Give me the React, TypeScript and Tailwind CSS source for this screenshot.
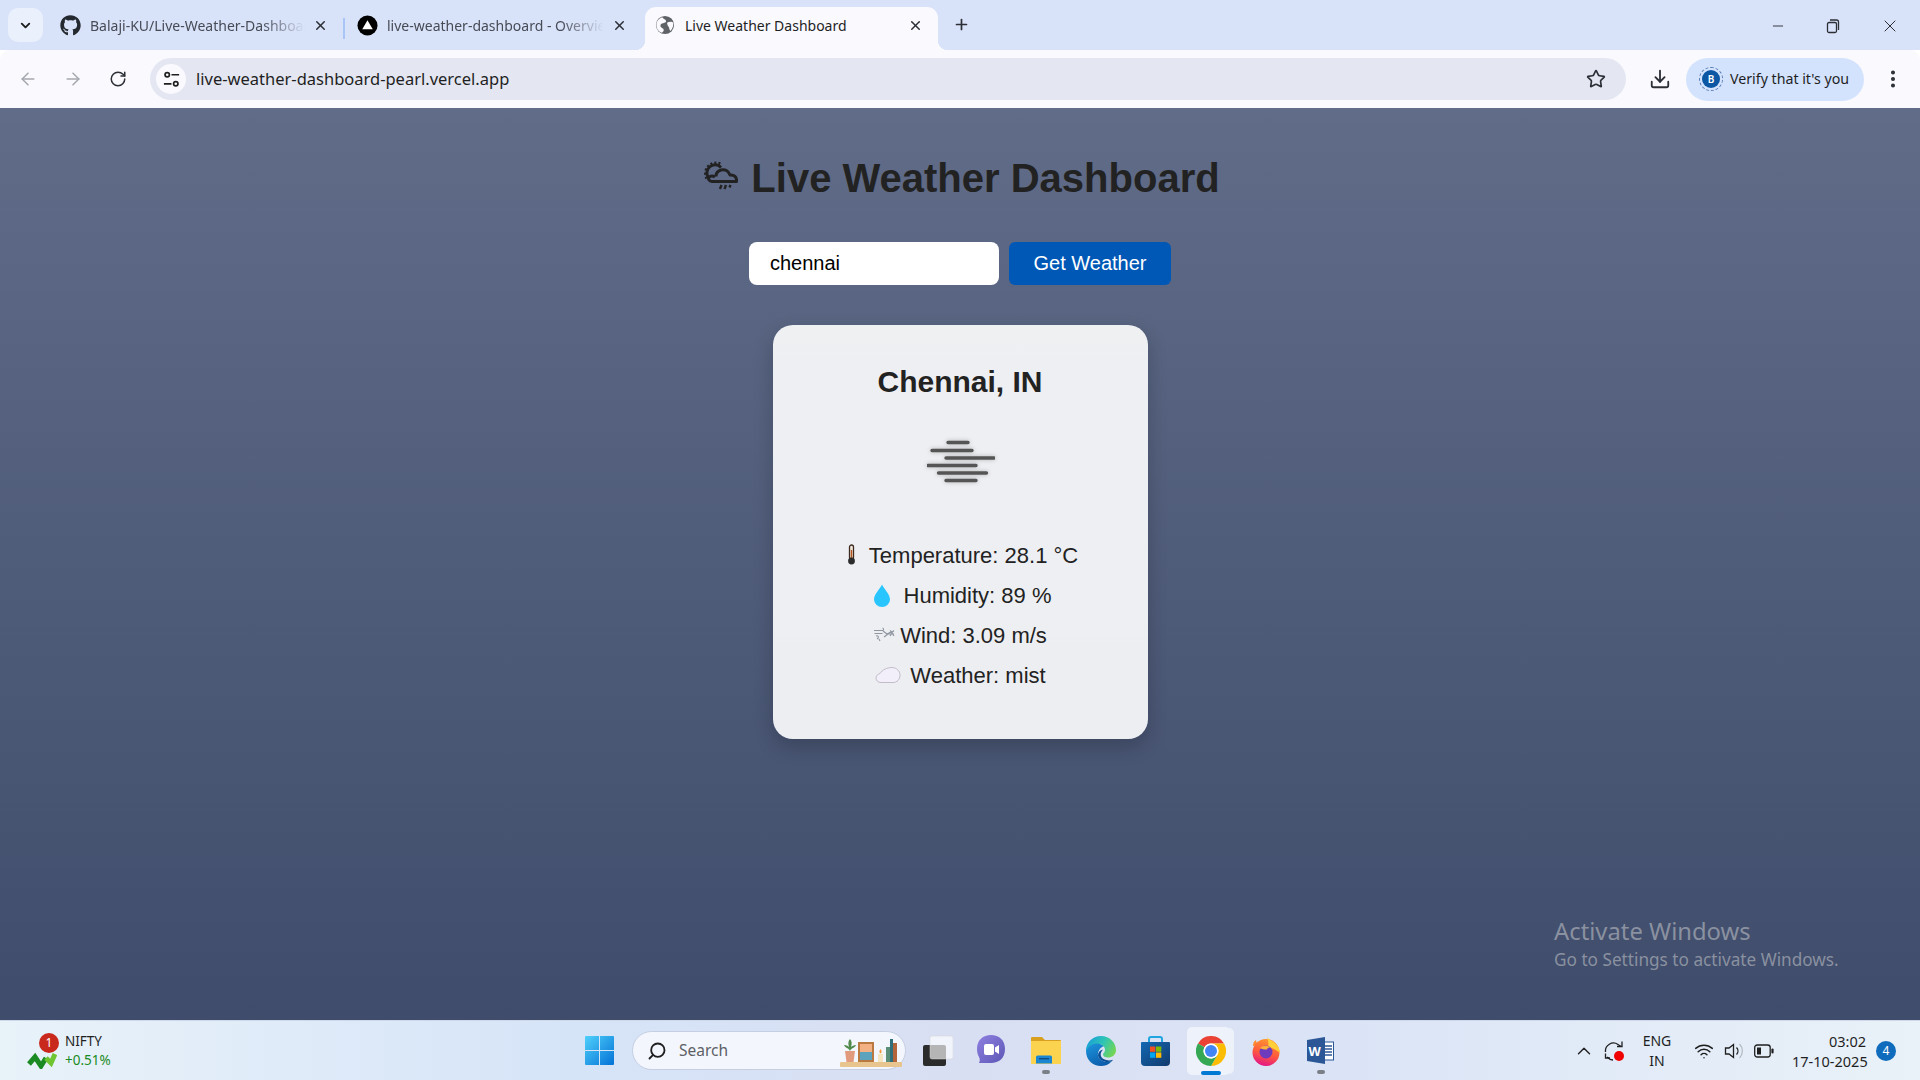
import React from 'react';
import {
  ArrowLeft,
  ArrowRight,
  ChevronDown,
  ChevronUp,
  Download,
  EllipsisVertical,
  Minus,
  Plus,
  RotateCw,
  Search,
  Star,
  Wifi,
  X,
} from 'lucide-react';
import { FaGithub } from 'react-icons/fa';

const uiFont = "font-['Noto_Sans',sans-serif]";

const Tab = ({
  title,
  icon,
  active,
  className,
}: {
  title: string;
  icon: React.ReactNode;
  active?: boolean;
  className: string;
}) => (
  <div
    className={`relative flex h-[43px] shrink-0 items-center pb-[7px] ${className} ${
      active ? 'rounded-t-[11px] bg-[#f9f9fe] text-[#1f1f1f]' : 'text-[#474b55]'
    }`}
  >
    {active && (
      <>
        <span className="absolute bottom-0 left-[-10px] h-[10px] w-[10px] bg-[radial-gradient(circle_at_0_0,transparent_10px,#f9f9fe_10.5px)]" />
        <span className="absolute bottom-0 right-[-10px] h-[10px] w-[10px] bg-[radial-gradient(circle_at_100%_0,transparent_10px,#f9f9fe_10.5px)]" />
      </>
    )}
    <span className="flex h-[22px] w-[22px] shrink-0 items-center justify-center">{icon}</span>
    <span
      className={`ml-[9px] min-w-0 flex-1 overflow-hidden whitespace-nowrap text-[14px] ${
        active ? '' : '[mask-image:linear-gradient(to_right,black_80%,transparent)]'
      }`}
    >
      {title}
    </span>
    <X className="ml-[8px] h-[15px] w-[15px] shrink-0 text-[#2c2f36]" strokeWidth={2.4} />
  </div>
);

const VercelIcon = () => (
  <svg viewBox="0 0 22 22" className="h-[21px] w-[21px]">
    <circle cx="11" cy="11" r="10.5" fill="#000" />
    <path d="M11 5.500 L16.500 15 H5.500 Z" fill="#fff" />
  </svg>
);

const GlobeIcon = () => (
  <svg viewBox="0 0 22 22" className="h-[20px] w-[20px]">
    <circle cx="11" cy="11" r="10" fill="#5f6368" />
    <path
      d="M8 2.500c1 2 3 2 4 3.500s-1 2.500-3 3-3 1-3 3 3 2 3.500 4-1 3-2 3.500C4 18.500 1.500 15 1.500 11 1.500 7 4 4 8 2.500zM14 8c2-1 5-1 6 .5.500 3-.500 6.500-3 9-1.500-1-1-3-2-4.500S12.500 9 14 8z"
      fill="#f9f9fe"
    />
  </svg>
);

const TuneIcon = () => (
  <svg viewBox="0 0 20 20" className="h-[19px] w-[19px]" fill="none" stroke="#1f1f1f" strokeWidth="1.800">
    <circle cx="5.500" cy="5" r="2.300" />
    <path d="M10 5h8M2 14.500h8" />
    <circle cx="14.500" cy="14.500" r="2.300" />
  </svg>
);

const ChromeHeader = () => (
  <header className={`${uiFont} shrink-0`}>
    <div className="flex h-[50px] items-end bg-[#d8e2f9] pl-2">
      <div className="mb-2 flex h-[34px] w-[35px] shrink-0 items-center justify-center rounded-[10px] bg-[#eaf0fc]">
        <ChevronDown className="h-[15px] w-[15px] text-[#1f1f1f]" strokeWidth={3} />
      </div>
      <div className="ml-[5px] flex items-end">
        <Tab
          title="Balaji-KU/Live-Weather-Dashboard"
          className="w-[295px] pl-[11px] pr-[15px]"
          icon={<FaGithub className="h-[21px] w-[21px] text-[#24292f]" />}
        />
        <div className="mb-[11px] h-[21px] w-[2px] shrink-0 bg-[#a9c5f5]" />
        <Tab title="live-weather-dashboard - Overview" className="w-[300px] pl-[11px] pr-[18px]" icon={<VercelIcon />} />
        <Tab title="Live Weather Dashboard" className="w-[293px] pl-[9px] pr-[15px]" active icon={<GlobeIcon />} />
      </div>
      <Plus className="mb-[17px] ml-[15px] h-[17px] w-[17px] text-[#2c2f36]" strokeWidth={2.4} />
      <div className="mb-[14px] ml-auto flex items-center pr-[20px] text-[#2c2f36]">
        <Minus className="h-[16px] w-[16px]" strokeWidth={1.4} />
        <svg viewBox="0 0 16 16" className="ml-[39px] h-[16px] w-[16px]" fill="none" stroke="currentColor" strokeWidth="1.300">
          <rect x="2.500" y="4.500" width="9" height="10" rx="1.500" />
          <path d="M5 2h6.500A2 2 0 0 1 13.500 4v8" />
        </svg>
        <X className="ml-[39px] h-[20px] w-[20px]" strokeWidth={1.2} />
      </div>
    </div>
    <div className="flex h-[58px] items-center rounded-t-[10px] bg-[#f9f9fe]">
      <div className="flex w-[150px] shrink-0 items-center pl-[18px]">
        <ArrowLeft className="h-[20px] w-[20px] text-[#a5a8ae]" strokeWidth={1.8} />
        <ArrowRight className="ml-[25px] h-[20px] w-[20px] text-[#a5a8ae]" strokeWidth={1.8} />
        <RotateCw className="ml-[26px] h-[18px] w-[18px] text-[#2c2f36]" strokeWidth={2} />
      </div>
      <div className="flex h-[42px] w-[1476px] shrink-0 items-center rounded-full bg-[#e4e7f2] pl-[6px] pr-[20px]">
        <div className="flex h-[30px] w-[30px] items-center justify-center rounded-full bg-[#f9f9fe]">
          <TuneIcon />
        </div>
        <span className="ml-[10px] text-[16.500px] text-[#1f1f1f]">live-weather-dashboard-pearl.vercel.app</span>
        <Star className="ml-auto h-[20px] w-[20px] text-[#2c2f36]" strokeWidth={2} />
      </div>
      <Download className="ml-[23px] h-[22px] w-[22px] shrink-0 text-[#2c2f36]" strokeWidth={2} />
      <div className="ml-[15px] flex h-[43px] w-[178px] shrink-0 items-center rounded-full bg-[#d3e3fd] pl-[13px]">
        <span className="flex h-[24px] w-[24px] items-center justify-center rounded-full border border-dashed border-[#5b7fb5] p-[2px]">
          <span className="flex h-full w-full items-center justify-center rounded-full bg-[#0b57a4] text-[10px] font-semibold text-white">
            B
          </span>
        </span>
        <span className="ml-[7px] whitespace-nowrap text-[14.200px] text-[#1f1f1f]">Verify that it's you</span>
      </div>
      <EllipsisVertical className="ml-[18px] h-[22px] w-[22px] shrink-0 text-[#2c2f36]" strokeWidth={2.4} />
    </div>
  </header>
);

const StatRow = ({ icon, text }: { icon: React.ReactNode; text: string }) => (
  <div className="flex h-10 items-center justify-center text-[22px] text-[#222]">
    {icon}
    <span>{text}</span>
  </div>
);

const WeatherCard = () => (
  <div className="mt-10 flex h-[414px] w-[375px] flex-col items-center rounded-[20px] bg-white/90 pt-10 shadow-[0_8px_20px_rgba(0,0,0,0.2)]">
    <h2 className="text-[30px] font-bold leading-[33px] text-[#222]">Chennai, IN</h2>
    <div className="mt-[14px] flex h-[100px] w-[100px] items-center justify-center pl-px">
      <svg
        viewBox="0 0 68 44"
        className="h-[44px] w-[68px] drop-shadow-[0_0_2px_rgba(0,0,0,0.25)]"
        stroke="#555"
        strokeWidth="3.400"
        strokeLinecap="round"
      >
        <path d="M21 2.500h20M5 10.500h40M19 18h48M1 25.500h48M11.500 33h48M19 40.500h30" />
      </svg>
    </div>
    <div className="mt-[23px] w-full">
      <StatRow
        text="Temperature: 28.1 °C"
        icon={
          <svg viewBox="0 0 27 24" className="h-6 w-[27px]">
            <rect x="7.500" y="2" width="4" height="14" rx="2" fill="#f3e6d8" stroke="#3a2a20" strokeWidth="1.300" />
            <rect x="8.800" y="7" width="1.400" height="10" fill="#b5541c" />
            <circle cx="9.500" cy="18" r="3.400" fill="#2b2b2b" />
          </svg>
        }
      />
      <StatRow
        text="Humidity: 89 %"
        icon={
          <svg viewBox="0 0 35 24" className="h-6 w-[35px]">
            <path d="M13 1.500C15 6 21 11 21 16.500a8 7.500 0 0 1-16 0C5 11 11 6 13 1.500z" fill="#29c5ff" />
          </svg>
        }
      />
      <StatRow
        text="Wind: 3.09 m/s"
        icon={
          <svg viewBox="0 0 27 24" className="h-6 w-[27px]" fill="none" stroke="#8f96a0" strokeWidth="1.100">
            <path d="M1 7.500h8c2 0 2-2 .5-2.500M1.500 10.500h8M3 13c3-1 3 2 1 3M6 16l1 2M10 8l4 3 5-2.500M11 14l4-3M17 7.500l2 2 2-2M17 13l2-3 2 3M15 11h6" />
          </svg>
        }
      />
      <StatRow
        text="Weather: mist"
        icon={
          <svg viewBox="0 0 36 24" className="h-6 w-[36px]">
            <path
              d="M7 19.500c-3 0-5-2-5-4.500 0-2.500 2-4 4-4.500C8 7 13 4.500 18 4.500c4.500 0 8 3.500 8 7.500 0 4.500-3 7.500-7 7.500z"
              fill="#f3effa"
              stroke="#c2bcc9"
              strokeWidth="1"
            />
          </svg>
        }
      />
    </div>
  </div>
);

const WinLogo = () => (
  <svg viewBox="0 0 29 29" className="h-[29px] w-[29px] shrink-0">
    <defs>
      <linearGradient id="win" x1="0" y1="0" x2="1" y2="1">
        <stop offset="0" stopColor="#4fd0fb" />
        <stop offset="1" stopColor="#0472d6" />
      </linearGradient>
    </defs>
    <path
      d="M1 0h13v14H0V1a1 1 0 0 1 1-1zM15 0h13a1 1 0 0 1 1 1v13H15zM0 15h14v14H1a1 1 0 0 1-1-1zM15 15h14v13a1 1 0 0 1-1 1H15z"
      fill="url(#win)"
    />
  </svg>
);

const ShelfArt = () => (
  <svg viewBox="0 0 64 36" className="h-[36px] w-[64px] shrink-0">
    <rect x="0" y="29" width="62" height="5" rx="1" fill="#e8c48e" />
    <path d="M5 18h10l-1.500 11h-7z" fill="#e29a7c" />
    <path d="M10 18c-1-3-5-3-6-6 3 0 4 1 5 2-1-3-1-6 1-8 2 2 2 5 1 8 1-1 3-2 5-2-1 3-5 3-6 6z" fill="#4f8a4a" />
    <rect x="18" y="9" width="16" height="20" fill="#b9793f" />
    <rect x="20" y="11" width="12" height="16" fill="#f3b183" />
    <rect x="20" y="19" width="12" height="8" fill="#5ea3bd" />
    <rect x="38" y="21" width="5" height="8" fill="#f6e6c0" />
    <path d="M40.500 16c1.500 2 1.500 3.500 0 4.500-1.500-1-1.500-2.500 0-4.500z" fill="#f29a38" />
    <rect x="46" y="14" width="5" height="15" fill="#5b8f78" />
    <rect x="50" y="6" width="3" height="23" fill="#2f6f7c" />
    <rect x="53" y="10" width="4" height="19" fill="#b3643a" />
  </svg>
);

const TaskIcon = ({
  children,
  dot,
  active,
}: {
  children: React.ReactNode;
  dot?: boolean;
  active?: boolean;
}) => (
  <div className="relative flex h-[48px] w-[47px] items-center justify-center">
    {active && (
      <>
        <span className="absolute inset-y-[1px] right-0 w-[8px] rounded-r-[5px] bg-white/50" />
        <span className="absolute inset-y-0 left-0 w-[43px] rounded-[5px] bg-[#eef2fb]" />
      </>
    )}
    <span className="relative flex">{children}</span>
    {dot && <span className="absolute bottom-[1px] h-[4px] w-[8px] rounded-full bg-[#7b7f88]" />}
    {active && <span className="absolute bottom-0 left-[14px] h-[4px] w-[20px] rounded-full bg-[#0078d4]" />}
  </div>
);

const TaskView = () => (
  <svg viewBox="0 0 30 30" className="h-[36px] w-[30px]">
    <rect x="0" y="9" width="23" height="21" rx="2" fill="#2b2b2b" />
    <rect x="7" y="0" width="23" height="23" rx="2" fill="#fff" fillOpacity="0.650" stroke="#d5d5d5" strokeWidth="0.500" />
  </svg>
);

const MeetIcon = () => (
  <svg viewBox="0 0 28 32" className="h-[32px] w-[28px]">
    <defs>
      <linearGradient id="meet" x1="0" y1="0" x2="1" y2="1">
        <stop offset="0" stopColor="#8e7fe0" />
        <stop offset="1" stopColor="#5d57b5" />
      </linearGradient>
    </defs>
    <path d="M14 0c8 0 14 5 14 14s-6 14-14 14H2c1-2 1-4 0-6-1.500-3-2-5-2-8C0 5 6 0 14 0z" fill="url(#meet)" />
    <rect x="7" y="9" width="10" height="11" rx="2" fill="#fff" />
    <path d="M18 12.500l4-2.500v9l-4-2.500z" fill="#fff" />
  </svg>
);

const FolderIcon = () => (
  <svg viewBox="0 0 30 27" className="h-[27px] w-[30px]">
    <path d="M1 0h10l3 3h15a1 1 0 0 1 1 1v6H0V1a1 1 0 0 1 1-1z" fill="#d9a020" />
    <path d="M0 4h30v22a1 1 0 0 1-1 1H1a1 1 0 0 1-1-1z" fill="#fcd34f" />
    <path d="M5 26v-6a1.500 1.500 0 0 1 1.500-1.500h13A1.500 1.500 0 0 1 21 20v6.500H5z" fill="#1b86d1" />
    <rect x="8" y="21" width="10" height="1.400" fill="#0f4d86" />
  </svg>
);

const EdgeIcon = () => (
  <svg viewBox="0 0 30 30" className="h-[30px] w-[30px]">
    <defs>
      <linearGradient id="edgeA" x1="0" y1="0.300" x2="1" y2="0.700">
        <stop offset="0" stopColor="#1a9fd8" />
        <stop offset="0.500" stopColor="#2fc5b4" />
        <stop offset="1" stopColor="#77d64f" />
      </linearGradient>
      <linearGradient id="edgeB" x1="0" y1="0" x2="0.500" y2="1">
        <stop offset="0" stopColor="#1e9ae0" />
        <stop offset="1" stopColor="#0d5fae" />
      </linearGradient>
    </defs>
    <path d="M0 15C0 24 7 30 15 30c4 0 8-1.500 10.500-4.500C20 27 13 25 12 19.500c-.500-4 2-8 6-9.500L11 6C5 7 0 10 0 15z" fill="url(#edgeB)" />
    <path d="M12 19.500c1 5.500 8 7.500 13.500 6 .5-.5 1-1 1.500-1.800-3 1.300-7 .8-9.500-.7-3-1.800-3.500-5-2-7.500.5-.800 1-1.300 1.500-2-3 .5-5 3-5 6z" fill="#0a4f94" />
    <path d="M15 0c9 0 15 7 15 14 0 5-4 7.500-8 7.500-3 0-5-1.200-5-3 0-1.500 2-2 2-4.500 0-4-4-6.500-8-6.500C6 7.500 2 11 0 15 0 7 6 0 15 0z" fill="url(#edgeA)" />
  </svg>
);

const StoreIcon = () => (
  <svg viewBox="0 0 29 30" className="h-[30px] w-[29px]">
    <defs>
      <linearGradient id="store" x1="0" y1="0" x2="1" y2="1">
        <stop offset="0" stopColor="#1268b3" />
        <stop offset="1" stopColor="#123a6d" />
      </linearGradient>
    </defs>
    <path d="M8 7V3a2 2 0 0 1 2-2h9a2 2 0 0 1 2 2v4" fill="none" stroke="#21a5e0" strokeWidth="2" />
    <path d="M1 6h27a1 1 0 0 1 1 1v19a4 4 0 0 1-4 4H4a4 4 0 0 1-4-4V7a1 1 0 0 1 1-1z" fill="url(#store)" />
    <rect x="9" y="10.500" width="5.300" height="5.300" fill="#f25022" />
    <rect x="15" y="10.500" width="5.300" height="5.300" fill="#7fba00" />
    <rect x="9" y="16.500" width="5.300" height="5.300" fill="#00a4ef" />
    <rect x="15" y="16.500" width="5.300" height="5.300" fill="#ffb900" />
  </svg>
);

const ChromeLogo = () => (
  <svg viewBox="1 1 30 30" className="h-[30px] w-[30px]">
    <path d="M3 8.500A15 15 0 0 1 29 8.500H16A7.500 7.500 0 0 0 9.500 12.250z" fill="#ea4335" />
    <path d="M29 8.500A15 15 0 0 1 16 31L22.500 19.750A7.500 7.500 0 0 0 16 8.500z" fill="#fbbc04" />
    <path d="M16 31A15 15 0 0 1 3 8.500L9.500 12.250A7.500 7.500 0 0 0 22.500 19.750z" fill="#34a853" />
    <circle cx="16" cy="16" r="7.500" fill="#fff" />
    <circle cx="16" cy="16" r="6" fill="#4285f4" />
  </svg>
);

const FirefoxIcon = () => (
  <svg viewBox="0 0 28 30" className="h-[30px] w-[28px]">
    <defs>
      <linearGradient id="ff" x1="0.700" y1="0" x2="0.400" y2="1">
        <stop offset="0" stopColor="#ff9a2e" />
        <stop offset="0.550" stopColor="#ff5a3c" />
        <stop offset="1" stopColor="#e31587" />
      </linearGradient>
    </defs>
    <path d="M1 10c0-3 1-5 3-6 0 3 2 4 4 5z" fill="#ff8a30" />
    <circle cx="14" cy="16.500" r="13.500" fill="url(#ff)" />
    <path d="M15 0c1 4 5 4 9 8 3 3 4 7 4 9-3-3-7-5-12-6 1-3 0-7-1-11z" fill="#ffcf3a" />
    <circle cx="14" cy="16" r="6.500" fill="#6e3bbd" />
    <path d="M8 12c3-3 8-3 10-.500-2 0-3 1-3 2-3 0-5 0-7-1.500z" fill="#ffb03a" />
  </svg>
);

const WordIcon = () => (
  <svg viewBox="0 0 27 27" className="h-[27px] w-[27px]">
    <rect x="17" y="5" width="9.500" height="18" fill="#fff" stroke="#2b5797" strokeWidth="1" />
    <path d="M18 9h7M18 12h7M18 15h7M18 18h7" stroke="#2b5797" strokeWidth="1.500" />
    <path d="M18 0v27L0 24V3z" fill="#2b5797" />
    <text x="1.500" y="18.500" fontSize="13" fontWeight="700" fill="#fff" fontFamily="'Liberation Sans',sans-serif">
      W
    </text>
  </svg>
);

const NiftyIcon = () => (
  <div className="relative h-[36px] w-[32px] shrink-0">
    <svg viewBox="0 0 30 20" className="absolute bottom-0 left-0 h-[20px] w-[30px]" fill="none" strokeWidth="5">
      <path d="M2 15l6-7 6 9 5-8" stroke="#1a8a22" />
      <path d="M19 9l5 5 4-9" stroke="#6ec531" />
    </svg>
    <span className="absolute right-0 top-0 flex h-[20px] w-[20px] items-center justify-center rounded-full bg-[#c9291d] text-[12px] text-white">
      1
    </span>
  </div>
);

const SyncIcon = () => (
  <div className="relative ml-[9px] h-[20px] w-[20px] shrink-0">
    <svg viewBox="0 0 20 20" className="h-[20px] w-[20px]" fill="none" stroke="currentColor" strokeWidth="1.300">
      <path d="M1.500 11A8 8 0 0 1 14 3.500l3 2" />
      <path d="M18 .5v5h-5" />
      <path d="M3 16c2 2 4 3 6 3" />
      <path d="M1.500 12.500V17h4.500" />
    </svg>
    <span className="absolute bottom-[0px] right-0 h-[10px] w-[10px] rounded-full bg-[#f00000]" />
  </div>
);

const VolumeIcon = () => (
  <svg viewBox="0 0 20 20" className="ml-[10px] h-[20px] w-[20px] shrink-0" fill="none" stroke="currentColor" strokeWidth="1.300">
    <path d="M1.500 7h3.500l4.500-3.500v13L5 13H1.500z" />
    <path d="M12.500 6.500a5 5 0 0 1 0 7" />
    <path d="M15.500 3a10 10 0 0 1 0 14" stroke="#b6bcc6" />
  </svg>
);

const BatteryIcon = () => (
  <svg viewBox="0 0 20 14" className="ml-[10px] h-[14px] w-[20px] shrink-0" fill="none" stroke="currentColor" strokeWidth="1.300">
    <rect x="0.700" y="1" width="15.500" height="12" rx="2.500" />
    <rect x="3" y="3.500" width="4" height="7" fill="currentColor" stroke="none" />
    <path d="M18.500 5.500v3" strokeWidth="2.200" strokeLinecap="round" />
  </svg>
);

const Taskbar = () => (
  <footer
    className={`${uiFont} flex h-[60px] shrink-0 items-center border-t border-[#cfd8e8] bg-[linear-gradient(90deg,#e8f2f9_0%,#d6e4f8_30%,#d9dff2_50%,#dbe4f6_70%,#e9f2f8_100%)]`}
  >
    <div className="flex w-[585px] shrink-0 items-center pl-[27px]">
      <NiftyIcon />
      <div className="ml-[6px] text-[13.500px] leading-[19px]">
        <div className="text-[#1f1f1f]">NIFTY</div>
        <div className="text-[#1a8a22]">+0.51%</div>
      </div>
    </div>
    <WinLogo />
    <div className="ml-[18px] flex h-[39px] w-[274px] shrink-0 items-center rounded-full border border-[#c6cfe2] bg-[#f3f6fd] pl-[14px] pr-[1px]">
      <Search className="h-[20px] w-[20px] -scale-x-100 text-[#1f1f1f]" strokeWidth={2.2} />
      <span className="ml-[12px] text-[15.500px] text-[#5d5f66]">Search</span>
      <div className="ml-auto">
        <ShelfArt />
      </div>
    </div>
    <div className="ml-[17px] flex w-[30px] shrink-0 justify-center">
      <TaskView />
    </div>
    <div className="ml-[14px] flex shrink-0 items-center gap-[8px]">
      <TaskIcon>
        <MeetIcon />
      </TaskIcon>
      <TaskIcon dot>
        <FolderIcon />
      </TaskIcon>
      <TaskIcon>
        <EdgeIcon />
      </TaskIcon>
      <TaskIcon>
        <StoreIcon />
      </TaskIcon>
      <TaskIcon active>
        <ChromeLogo />
      </TaskIcon>
      <TaskIcon>
        <FirefoxIcon />
      </TaskIcon>
      <TaskIcon dot>
        <WordIcon />
      </TaskIcon>
    </div>
    <div className="ml-auto flex items-center pr-[24px] text-[14.500px] text-[#1f1f1f]">
      <ChevronUp className="h-[22px] w-[22px]" strokeWidth={1.5} />
      <SyncIcon />
      <div className="ml-[17px] w-[32px] text-center text-[14px] leading-[20px]">
        <div>ENG</div>
        <div>IN</div>
      </div>
      <Wifi className="ml-[21px] h-[20px] w-[20px]" strokeWidth={1.8} />
      <VolumeIcon />
      <BatteryIcon />
      <div className="ml-[18px] w-[74px] text-right leading-[20px]">
        <div>03:02</div>
        <div className="whitespace-nowrap">17-10-2025</div>
      </div>
      <span className="ml-[10px] flex h-[20px] w-[20px] items-center justify-center rounded-full bg-[#0f6cbd] text-[12px] text-white">
        4
      </span>
    </div>
  </footer>
);

export default function App() {
  return (
    <div className="flex h-screen w-full flex-col overflow-hidden font-['Liberation_Sans',Arial,sans-serif]">
      <ChromeHeader />
      <main className="relative flex min-h-0 flex-1 flex-col items-center bg-[linear-gradient(#606c88,#3f4c6b)] pt-[47px]">
        <h1 className="flex h-[46px] items-center pl-[4px] text-[40px] font-bold text-[#222]">
          <svg viewBox="0 0 34 30" className="mb-[4px] mr-[13px] h-[30px] w-[34px]" fill="none" stroke="#222" strokeWidth="3">
            <path d="M5 17.500A8 8 0 0 1 17 6.500" />
            <path d="M2.800 17.500A10.500 10.500 0 0 1 18 3.800" strokeWidth="2.800" strokeDasharray="2 2" />
            <path d="M8 20.500H32.500C33 16 30 13.500 26 14 24.500 10 21 8 17 9 13.500 10 12 13 12 15.500" strokeLinejoin="round" />
            <path d="M8 20.500C5 20.500 4 18 5 16.500 6 14.500 9 14.500 11 16" />
            <path d="M17.500 24l-1.500 4M22 24l-1.500 4M26.500 24l-1 2.500" strokeWidth="2.400" />
          </svg>
          Live Weather Dashboard
        </h1>
        <form className="mt-[41px] flex gap-[10px]">
          <input
            readOnly
            value="chennai"
            className="h-[43px] w-[250px] rounded-[8px] bg-white px-[21px] text-[20px] text-black outline-none"
          />
          <button type="button" className="h-[43px] w-[162px] rounded-[6px] bg-[#0058b6] pb-[2px] text-[20px] text-white">
            Get Weather
          </button>
        </form>
        <WeatherCard />
        <div className={`${uiFont} absolute left-[1554px] top-[807px] text-[#8a91a0]`}>
          <div className="text-[23.800px] leading-[32px]">Activate Windows</div>
          <div className="text-[17.200px] leading-[26px]">Go to Settings to activate Windows.</div>
        </div>
      </main>
      <Taskbar />
    </div>
  );
}
